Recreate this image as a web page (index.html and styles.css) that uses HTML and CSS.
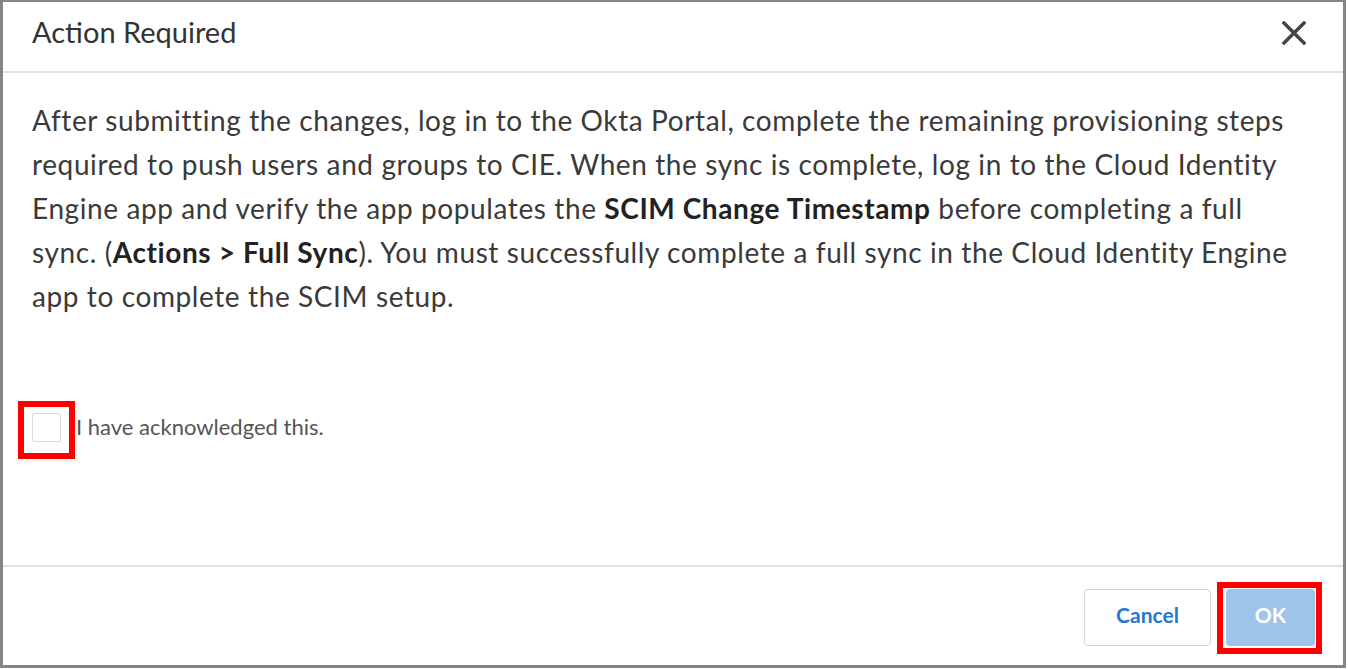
FILE: index.html
```html
<!DOCTYPE html>
<html>
<head>
<meta charset="utf-8">
<link rel="stylesheet" href="styles.css">
</head>
<body>
<div class="dialog">
  <div class="header">
    <div class="title">Action Required</div>
    <button class="close" aria-label="Close">
      <svg width="24" height="24" viewBox="0 0 24 24"><path d="M2 2 L22 22 M22 2 L2 22" stroke="#444" stroke-width="3.4" stroke-linecap="square" fill="none"/></svg>
    </button>
  </div>
  <div class="body">
    <p class="message">After submitting the changes, log in to the Okta Portal, complete the remaining provisioning steps required to push users and groups to CIE. When the sync is complete, log in to the Cloud Identity Engine app and verify the app populates the <b>SCIM Change Timestamp</b> before completing a full sync. (<b>Actions &gt; Full Sync</b>). You must successfully complete a full sync in the Cloud Identity Engine app to complete the SCIM setup.</p>
    <label class="ack">
      <span class="box highlight"></span>
      <span class="ack-text">I have acknowledged this.</span>
    </label>
  </div>
  <div class="footer">
    <button class="btn cancel">Cancel</button>
    <button class="btn ok highlight-btn">OK</button>
  </div>
</div>
</body>
</html>
```
FILE: styles.css
```css
html, body {
  margin: 0;
  padding: 0;
  background: #fff;
}
body {
  font-family: Lato, "Open Sans", sans-serif;
  width: 1348px;
  height: 669px;
  overflow: hidden;
}
.dialog {
  width: 1346px;
  height: 668px;
  box-sizing: border-box;
  border-style: solid;
  border-color: #858585;
  border-width: 2px 3px 3px 3px;
  display: flex;
  flex-direction: column;
}
.header {
  height: 69px;
  border-bottom: 2px solid #e2e2e2;
  display: flex;
  align-items: center;
  justify-content: space-between;
  padding: 0 37px 0 29px;
}
.title {
  font-size: 29px;
  color: #333;
  margin-top: -11px;
}
.close {
  background: none;
  border: none;
  padding: 0;
  width: 24px;
  height: 24px;
  margin-top: -7px;
  display: flex;
}
.body {
  flex: 1;
  padding: 25px 44px 0 29px;
}
.message {
  margin: 0;
  font-size: 28px;
  letter-spacing: 0.6px;
  line-height: 44px;
  color: #3a3a3a;
}
.message b {
  font-weight: 700;
  color: #222;
}
.ack {
  display: flex;
  align-items: center;
  margin-top: 95px;
  gap: 15px;
}
.box {
  position: relative;
  width: 27px;
  height: 27px;
  border: 1px solid #d9d9d9;
  border-radius: 2px;
  background: #fff;
  flex: none;
}
.highlight::after {
  content: "";
  position: absolute;
  left: -15px;
  top: -13px;
  right: -15px;
  bottom: -18px;
  border: 6px solid #f00;
}
.ack-text {
  font-size: 22px;
  color: #555;
  margin-top: -2px;
}
.footer {
  height: 100px;
  flex: none;
  border-top: 2px solid #e2e2e2;
  display: flex;
  justify-content: flex-end;
  align-items: flex-start;
  gap: 15px;
  padding: 22px 28px 0 0;
  box-sizing: border-box;
}
.btn {
  height: 57px;
  border-radius: 4px;
  font-family: Lato, "Open Sans", sans-serif;
  font-size: 21px;
  font-weight: 700;
  position: relative;
  padding-bottom: 8px;
}
.cancel {
  width: 127px;
  background: #fff;
  border: 1px solid #d6d6d6;
  color: #1f78d1;
}
.ok {
  width: 89px;
  background: #9dc5e9;
  border: none;
  color: #fff;
}
.highlight-btn::after {
  content: "";
  position: absolute;
  left: -9px;
  top: -7px;
  right: -7px;
  bottom: -8px;
  border: 6px solid #f00;
}
```
